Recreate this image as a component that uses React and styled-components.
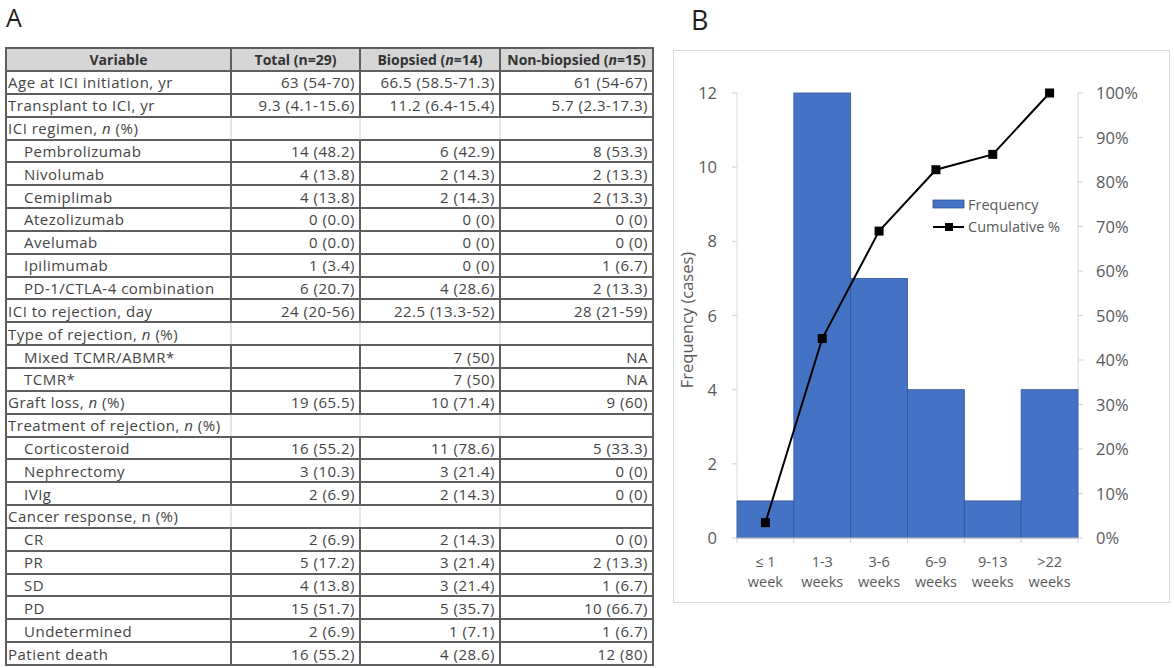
import React from "react";
import styled, { createGlobalStyle } from "styled-components";

const GlobalStyle = createGlobalStyle`
  html, body { margin: 0; padding: 0; background: #fff; }
  body { font-family: "Open Sans", "Liberation Sans", sans-serif; color: #3b3b3b; }
`;

const rows = [
  { label: "Age at ICI initiation, yr", v: ["63 (54-70)", "66.5 (58.5-71.3)", "61 (54-67)"] },
  { label: "Transplant to ICI, yr", v: ["9.3 (4.1-15.6)", "11.2 (6.4-15.4)", "5.7 (2.3-17.3)"] },
  { label: <>ICI regimen, <i>n</i> (%)</>, section: true },
  { label: "Pembrolizumab", indent: true, v: ["14 (48.2)", "6 (42.9)", "8 (53.3)"] },
  { label: "Nivolumab", indent: true, v: ["4 (13.8)", "2 (14.3)", "2 (13.3)"] },
  { label: "Cemiplimab", indent: true, v: ["4 (13.8)", "2 (14.3)", "2 (13.3)"] },
  { label: "Atezolizumab", indent: true, v: ["0 (0.0)", "0 (0)", "0 (0)"] },
  { label: "Avelumab", indent: true, v: ["0 (0.0)", "0 (0)", "0 (0)"] },
  { label: "Ipilimumab", indent: true, v: ["1 (3.4)", "0 (0)", "1 (6.7)"] },
  { label: "PD-1/CTLA-4 combination", indent: true, v: ["6 (20.7)", "4 (28.6)", "2 (13.3)"] },
  { label: "ICI to rejection, day", v: ["24 (20-56)", "22.5 (13.3-52)", "28 (21-59)"] },
  { label: <>Type of rejection, <i>n</i> (%)</>, section: true },
  { label: "Mixed TCMR/ABMR*", indent: true, v: ["", "7 (50)", "NA"] },
  { label: "TCMR*", indent: true, v: ["", "7 (50)", "NA"] },
  { label: <>Graft loss, <i>n</i> (%)</>, v: ["19 (65.5)", "10 (71.4)", "9 (60)"] },
  { label: <>Treatment of rejection, <i>n</i> (%)</>, section: true },
  { label: "Corticosteroid", indent: true, v: ["16 (55.2)", "11 (78.6)", "5 (33.3)"] },
  { label: "Nephrectomy", indent: true, v: ["3 (10.3)", "3 (21.4)", "0 (0)"] },
  { label: "IVIg", indent: true, v: ["2 (6.9)", "2 (14.3)", "0 (0)"] },
  { label: "Cancer response, n (%)", section: true },
  { label: "CR", indent: true, v: ["2 (6.9)", "2 (14.3)", "0 (0)"] },
  { label: "PR", indent: true, v: ["5 (17.2)", "3 (21.4)", "2 (13.3)"] },
  { label: "SD", indent: true, v: ["4 (13.8)", "3 (21.4)", "1 (6.7)"] },
  { label: "PD", indent: true, v: ["15 (51.7)", "5 (35.7)", "10 (66.7)"] },
  { label: "Undetermined", indent: true, v: ["2 (6.9)", "1 (7.1)", "1 (6.7)"] },
  { label: "Patient death", v: ["16 (55.2)", "4 (28.6)", "12 (80)"] },
];

const bins = [
  { top: "≤ 1", bottom: "week", n: 1 },
  { top: "1-3", bottom: "weeks", n: 12 },
  { top: "3-6", bottom: "weeks", n: 7 },
  { top: "6-9", bottom: "weeks", n: 4 },
  { top: "9-13", bottom: "weeks", n: 1 },
  { top: ">22", bottom: "weeks", n: 4 },
];

// plot geometry, in page pixels
const X0 = 737;
const X1 = 1078;
const Y0 = 538;
const Y12 = 93;
const BW = (X1 - X0) / bins.length;
const yCount = (c) => Y0 - ((Y0 - Y12) * c) / 12;
const yPct = (p) => Y0 - ((Y0 - Y12) * p) / 100;

function Chart() {
  const total = bins.reduce((s, b) => s + b.n, 0);
  let run = 0;
  const points = bins.map((b, i) => {
    run += b.n;
    return [X0 + BW * i + BW / 2, yPct((run / total) * 100)];
  });

  return (
    <ChartSvg viewBox="674 51 495 551" width="495" height="551">
      {/* axes */}
      <line x1={X0} y1={Y12} x2={X0} y2={Y0} stroke="#d9d9d9" strokeWidth="1" />
      <line x1={X1} y1={Y12} x2={X1} y2={Y0} stroke="#d9d9d9" strokeWidth="1" />
      {[0, 2, 4, 6, 8, 10, 12].map((c) => (
        <g key={c}>
          <line x1={X0 - 5} y1={yCount(c)} x2={X0} y2={yCount(c)} stroke="#d0d0d0" />
          <AxisText x={717} y={yCount(c) + 6} textAnchor="end" $size={16.5}>
            {c}
          </AxisText>
        </g>
      ))}
      {[0, 10, 20, 30, 40, 50, 60, 70, 80, 90, 100].map((p) => (
        <g key={p}>
          <line x1={X1} y1={yPct(p)} x2={X1 + 5} y2={yPct(p)} stroke="#d0d0d0" />
          <AxisText x={1096} y={yPct(p) + 6} $size={16.5}>
            {p}%
          </AxisText>
        </g>
      ))}

      {/* bars */}
      {bins.map((b, i) => (
        <rect
          key={i}
          x={X0 + BW * i}
          y={yCount(b.n)}
          width={BW}
          height={Y0 - yCount(b.n)}
          fill="#4472c4"
          stroke="#2f5597"
          strokeWidth="0.8"
        />
      ))}

      <line x1={X0} y1={Y0} x2={X1} y2={Y0} stroke="#d0d0d0" strokeWidth="1" />
      {bins.map((b, i) => (
        <line key={i} x1={X0 + BW * i} y1={Y0} x2={X0 + BW * i} y2={Y0 + 5} stroke="#d0d0d0" />
      ))}
      <line x1={X1} y1={Y0} x2={X1} y2={Y0 + 5} stroke="#d0d0d0" />

      {/* x labels */}
      {bins.map((b, i) => (
        <AxisText key={i} x={X0 + BW * i + BW / 2} y={567} textAnchor="middle" $size={14.5}>
          <tspan>{b.top}</tspan>
          <tspan x={X0 + BW * i + BW / 2} dy="20">
            {b.bottom}
          </tspan>
        </AxisText>
      ))}

      {/* cumulative line */}
      <polyline
        points={points.map((p) => p.join(",")).join(" ")}
        fill="none"
        stroke="#000"
        strokeWidth="2"
      />
      {points.map(([x, y], i) => (
        <rect key={i} x={x - 4.5} y={y - 4.5} width="9" height="9" fill="#000" />
      ))}

      {/* y title */}
      <AxisText x={0} y={0} textAnchor="middle" transform="translate(693 320) rotate(-90)" $size={16.5}>
        Frequency (cases)
      </AxisText>

      {/* legend */}
      <rect x={933} y={200} width={31} height={8} fill="#4472c4" stroke="#2f5597" strokeWidth="0.8" />
      <AxisText x={968} y={210} $size={14.5}>
        Frequency
      </AxisText>
      <line x1={933} y1={227} x2={964} y2={227} stroke="#000" strokeWidth="2" />
      <rect x={945} y={223} width="8" height="8" fill="#000" />
      <AxisText x={968} y={232} $size={14.5}>
        Cumulative %
      </AxisText>
    </ChartSvg>
  );
}

export default function App() {
  return (
    <>
      <GlobalStyle />
      <Page>
        <PanelA>
          <PanelLabel>A</PanelLabel>
          <Table>
            <colgroup>
              <col style={{ width: 225 }} />
              <col style={{ width: 129 }} />
              <col style={{ width: 140 }} />
              <col style={{ width: 153 }} />
            </colgroup>
            <thead>
              <HeadRow>
                <HeadCell>Variable</HeadCell>
                <HeadCell>Total (n=29)</HeadCell>
                <HeadCell>
                  Biopsied (<i>n</i>=14)
                </HeadCell>
                <HeadCell>
                  Non-biopsied (<i>n</i>=15)
                </HeadCell>
              </HeadRow>
            </thead>
            <tbody>
              {rows.map((r, i) => (
                <Row key={i} $section={r.section}>
                  <LabelCell $indent={r.indent}>{r.label}</LabelCell>
                  {(r.v || ["", "", ""]).map((v, j) => (
                    <ValueCell key={j}>{v}</ValueCell>
                  ))}
                </Row>
              ))}
            </tbody>
          </Table>
        </PanelA>
        <PanelB>
          <PanelLabel $b>B</PanelLabel>
          <ChartBox>
            <Chart />
          </ChartBox>
        </PanelB>
      </Page>
    </>
  );
}

const Page = styled.div`
  display: flex;
  align-items: flex-start;
  width: 1174px;
  height: 668px;
  overflow: hidden;
  background: #fff;
`;

const PanelA = styled.section`
  width: 647px;
  margin-left: 5px;
`;

const PanelB = styled.section`
  width: 497px;
  margin-left: 21px;
`;

const PanelLabel = styled.div`
  height: ${(p) => (p.$b ? "50px" : "47px")};
  padding-left: ${(p) => (p.$b ? "18px" : "1px")};
  font-family: "Open Sans", sans-serif;
  font-size: ${(p) => (p.$b ? "27px" : "25px")};
  line-height: ${(p) => (p.$b ? "40px" : "34px")};
  color: #1e1e1e;
  box-sizing: border-box;
`;

const Table = styled.table`
  width: 647px;
  table-layout: fixed;
  border-collapse: collapse;
  font-family: "Open Sans", "Liberation Sans", sans-serif;
  font-size: 15px;
  letter-spacing: 0.5px;
  color: #444;
`;

const HeadRow = styled.tr`
  height: 23px;
  background: #d6d6d6;
`;

const HeadCell = styled.th`
  border: 2px solid #5e5e5e;
  padding: 0 3px;
  font-size: 14px;
  letter-spacing: 0;
  font-weight: 700;
  text-align: center;
  white-space: nowrap;
  color: #333;
  line-height: 18px;
`;

const Row = styled.tr`
  height: 22.85px;
  ${(p) =>
    p.$section &&
    `
    td:not(:last-child) { border-right-color: #e6e6e6; }
    td + td { border-left-color: #e6e6e6; }
  `}
`;

const LabelCell = styled.td`
  border: 2px solid #5e5e5e;
  padding: 0 3px 0 ${(p) => (p.$indent ? "17px" : "1px")};
  white-space: nowrap;
  overflow: hidden;
  line-height: 18px;
`;

const ValueCell = styled.td`
  border: 2px solid #5e5e5e;
  padding: 0 4px 0 2px;
  text-align: right;
  white-space: nowrap;
  line-height: 18px;
`;

const ChartBox = styled.div`
  width: 497px;
  height: 553px;
  border: 1px solid #d9d9d9;
  box-sizing: border-box;
`;

const ChartSvg = styled.svg`
  display: block;
`;

const AxisText = styled.text`
  font-family: "Open Sans", "Liberation Sans", sans-serif;
  font-size: ${(p) => (p.$size || 14)}px;
  fill: #595959;
`;
